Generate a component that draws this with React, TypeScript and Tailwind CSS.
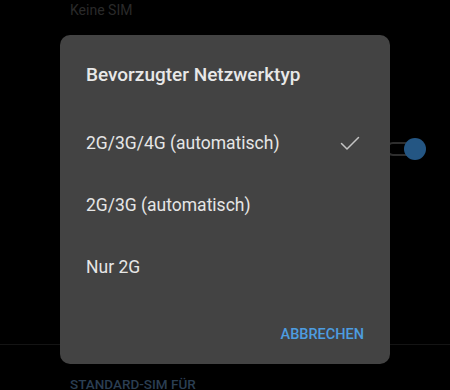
import React from "react";

export default function App() {
  const font = { fontFamily: "Roboto, 'Noto Sans', sans-serif" };
  return (
    <div className="relative w-[450px] h-[390px] bg-black overflow-hidden" style={font}>
      {/* background settings page */}
      <div className="flex flex-col h-full">
        <div className="pl-[70px] pt-[1px] text-[14px] leading-[18px] text-[#2a2a2a]">Keine SIM</div>
        <div className="flex items-center justify-end h-[22px] mt-[119px] pr-[30px]">
          <div className="relative w-[34px] h-[14px]">
            <div className="absolute inset-0 rounded-full border-2 border-[#2e2e2e]" />
            <div className="absolute right-[-6px] top-[-4px] w-[22px] h-[22px] rounded-full bg-[#245683]" />
          </div>
        </div>
        <div className="flex-1" />
        <div className="h-px bg-[#141414] mb-[31px]" />
        <div className="pl-[70px] text-[13.5px] leading-[16px] font-medium text-[#2b3e52] mb-[-2px] h-[16px]">STANDARD-SIM FÜR</div>
      </div>

      {/* dialog */}
      <div className="absolute left-[60px] top-[35px] w-[330px] h-[329px] rounded-[10px] bg-[#434343] flex flex-col">
        <div className="pl-[26px] pt-[28px] text-[19px] leading-[24px] font-medium text-[#e8e8e8]">
          Bevorzugter Netzwerktyp
        </div>
        <div className="flex flex-col mt-[25px]">
          <div className="flex items-center justify-between h-[62px] pl-[26px] pr-[30px] text-[17.5px] text-[#e6e6e6]">
            <span>2G/3G/4G (automatisch)</span>
            <svg width="20" height="16" viewBox="0 0 20 16" fill="none">
              <path d="M1.5 8.5 L7 14 L18.5 2.5" stroke="#c4c4c4" strokeWidth="1.5" strokeLinecap="round" strokeLinejoin="round" />
            </svg>
          </div>
          <div className="flex items-center h-[62px] pl-[26px] text-[17.5px] text-[#e6e6e6]">2G/3G (automatisch)</div>
          <div className="flex items-center h-[62px] pl-[26px] text-[17.5px] text-[#e6e6e6]">Nur 2G</div>
        </div>
        <div className="flex-1" />
        <div className="flex justify-end pr-[26px] pb-[21px]">
          <span className="text-[14.5px] leading-[16px] font-medium text-[#4d9de0]">ABBRECHEN</span>
        </div>
      </div>
    </div>
  );
}
